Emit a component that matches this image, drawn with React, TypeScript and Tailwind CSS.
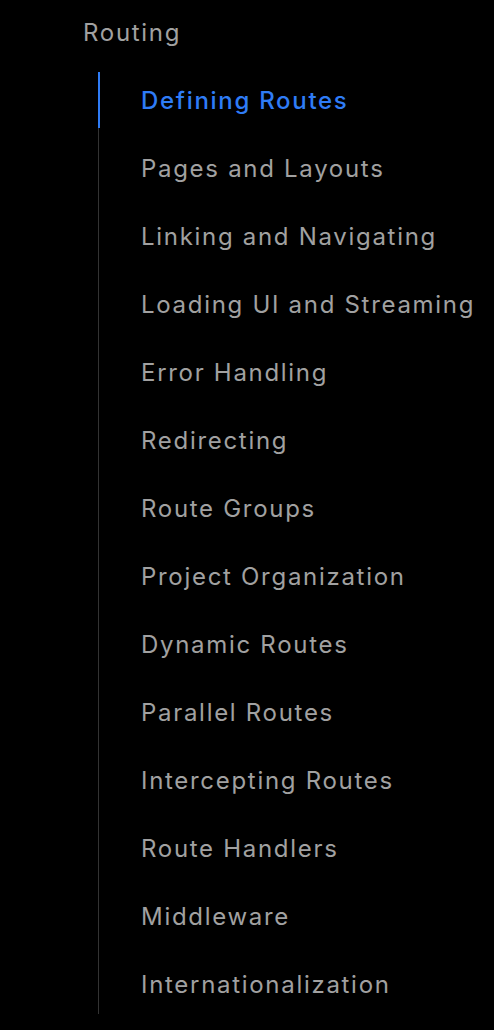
import React from 'react';

const items = [
  'Defining Routes',
  'Pages and Layouts',
  'Linking and Navigating',
  'Loading UI and Streaming',
  'Error Handling',
  'Redirecting',
  'Route Groups',
  'Project Organization',
  'Dynamic Routes',
  'Parallel Routes',
  'Intercepting Routes',
  'Route Handlers',
  'Middleware',
  'Internationalization',
];

export default function App() {
  const active = 'Defining Routes';
  return (
    <div className="min-h-[1030px] w-[494px] bg-black font-['Inter',sans-serif] text-[24px] tracking-[1.7px]">
      <div className="pl-[83px] pt-[15px] h-[72px] text-[#a1a1a1]">Routing</div>
      <ul className="ml-[98px] border-l border-[#333333] flex flex-col gap-[12px] pb-[2px]">
        {items.map(item => (
          <li
            key={item}
            className={`h-[56px] flex items-center pl-[41px] -ml-px border-l-2 pt-[2px] ${
              item === active ? 'border-[#2f7cf6] text-[#2f7cf6] font-medium' : 'border-transparent text-[#a1a1a1]'
            }`}
          >
            {item}
          </li>
        ))}
      </ul>
    </div>
  );
}
